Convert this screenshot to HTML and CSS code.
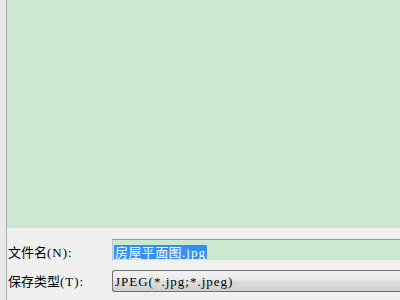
FILE: index.html
```html
<!DOCTYPE html>
<html>
<head>
<meta charset="utf-8">
<link rel="stylesheet" href="styles.css">
</head>
<body>
<div class="side"></div>
<div class="main">
  <div class="preview"></div>
  <div class="form">
    <div class="row">
      <div class="label label-name">文件名<span class="lat">(N):</span></div>
      <div class="field"><span class="sel">房屋平面图<span class="lat">.jpg</span></span></div>
    </div>
    <div class="row">
      <div class="label">保存类型<span class="lat">(T):</span></div>
      <div class="combo"><span class="lat">JPEG(*.jpg;*.jpeg)</span></div>
    </div>
  </div>
</div>
</body>
</html>
```
FILE: styles.css
```css
html, body {
  margin: 0;
  padding: 0;
}
body {
  width: 400px;
  height: 300px;
  overflow: hidden;
  display: flex;
  background: #f0f0f0;
  font-family: "Noto Sans CJK SC", "Liberation Sans", sans-serif;
  font-size: 13px;
  color: #000;
}
.side {
  width: 6px;
  flex: none;
  background: #e9e9e9;
  border-right: 1px solid #a3a9b0;
}
.main {
  flex: 1;
  min-width: 0;
  display: flex;
  flex-direction: column;
}
.preview {
  height: 228px;
  flex: none;
  background: #cce8cf;
}
.form {
  padding-top: 11px;
  display: flex;
  flex-direction: column;
  gap: 9px;
}
.row {
  display: flex;
  height: 22px;
}
.label {
  width: 104px;
  flex: none;
  padding-left: 1px;
  line-height: 22px;
  white-space: nowrap;
}
.label-name {
  padding-top: 3px;
  line-height: 20px;
  height: 19px;
}
.lat {
  font-family: "Liberation Serif", serif;
  letter-spacing: 1px;
}
.field {
  width: 300px;
  flex: none;
  box-sizing: border-box;
  height: 22px;
  border: 1px solid #b4c6d8;
  border-top-color: #7f9db9;
  border-bottom-color: #eef3f8;
  border-right: none;
  background: #cce8cf;
  padding: 2px 0 0 1px;
  white-space: nowrap;
}
.sel {
  display: inline-block;
  height: 14px;
  line-height: 14px;
  padding: 0 1px;
  letter-spacing: 0.4px;
  background: #3390f0;
  color: #fff;
}
.combo {
  width: 300px;
  flex: none;
  box-sizing: border-box;
  height: 22px;
  border: 1px solid #707070;
  border-right: none;
  border-radius: 3px 0 0 3px;
  background: linear-gradient(#f2f2f2 0%, #ebebeb 45%, #dddddd 50%, #cfcfcf 100%);
  padding-left: 2px;
  line-height: 20px;
  white-space: nowrap;
}
```
